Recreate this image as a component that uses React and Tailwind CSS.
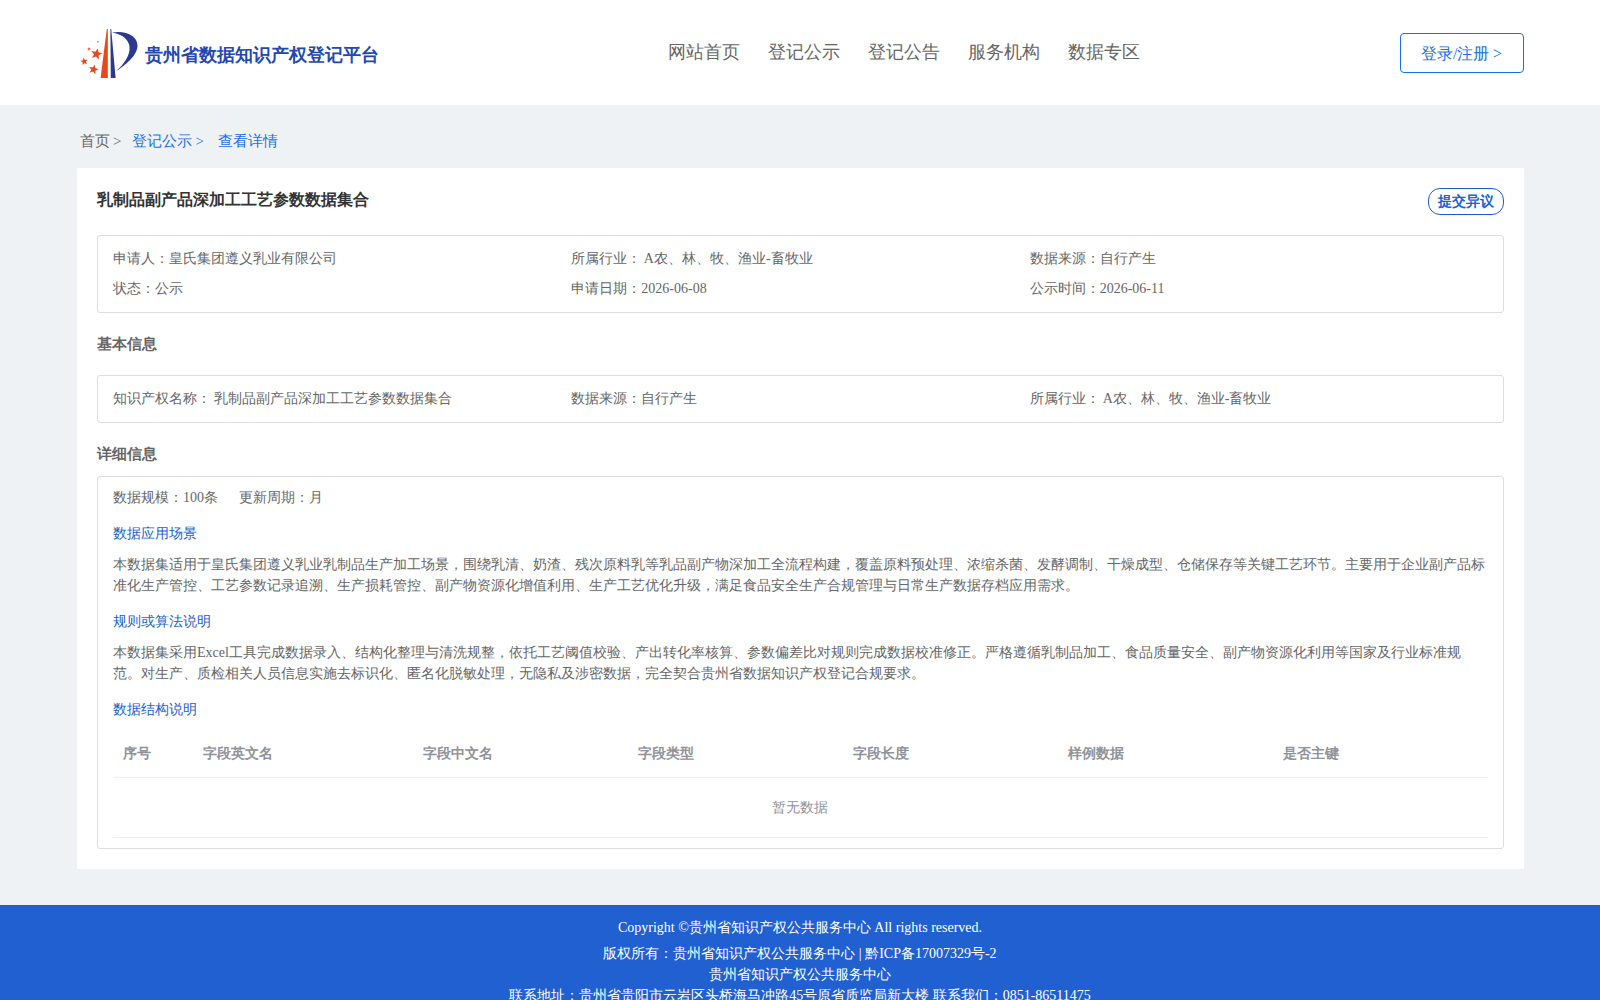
function starPoints(cx, cy, R, rot) {
  const pts = [];
  for (let i = 0; i < 10; i++) {
    const r = i % 2 === 0 ? R : R * 0.42;
    const a = (rot - 90 + i * 36) * (Math.PI / 180);
    pts.push(`${(cx + r * Math.cos(a)).toFixed(2)},${(cy + r * Math.sin(a)).toFixed(2)}`);
  }
  return pts.join(" ");
}

function Logo() {
  return (
    <svg width="60" height="52" viewBox="0 0 60 52" className="shrink-0">
      <path d="M26.8 2 L27.8 2 L27.8 51 L20.6 51 Z" fill="#e8481c" />
      <path d="M30.4 2 L31.2 2 L35.6 51 L30.8 51 Z" fill="#2b3a8f" />
      <path d="M32 5.5 C46 3 57.5 9 57.5 18.5 C57.5 29 45 38 36 44.5 C44 37 50.5 28 49.5 19.5 C48.5 11.5 41 7 32 5.5 Z" fill="#2b3a8f" />
      <polygon points={starPoints(16.5, 27, 6, 12)} fill="#e8481c" />
      <polygon points={starPoints(4.2, 34.5, 4, -10)} fill="#e8481c" />
      <polygon points={starPoints(13.5, 42.5, 5.2, 14)} fill="#e8481c" />
      <circle cx="9" cy="22" r="1.5" fill="#ef7a50" />
      <circle cx="17.8" cy="14.8" r="1" fill="#ef8a60" />
    </svg>
  );
}

function Row({ children }) {
  return <div className="grid grid-cols-3">{children}</div>;
}

const cols = ["序号", "字段英文名", "字段中文名", "字段类型", "字段长度", "样例数据", "是否主键"];

export default function App() {
  return (
    <div className="min-h-screen bg-[#eff2f5] text-[14px] text-[#666666] font-['Liberation_Serif',serif]">
      <header className="h-[105px] bg-white flex items-center justify-between pl-[80px] pr-[76px]">
        <div className="flex items-center w-[300px]">
          <Logo />
          <span className="ml-[5px] mt-[6px] text-[18px] font-bold text-[#2348b0]">贵州省数据知识产权登记平台</span>
        </div>
        <nav className="flex gap-[28px] text-[18px] text-[#666666] -mt-[1px] ml-[28px]">
          <span>网站首页</span>
          <span>登记公示</span>
          <span>登记公告</span>
          <span>服务机构</span>
          <span>数据专区</span>
        </nav>
        <button className="w-[124px] h-[40px] border border-[#1a6fe8] rounded-[4px] text-[16px] text-[#1a6fe8] pt-[2px] pr-[1px] [word-spacing:-0.5px]">登录/注册 &gt;</button>
      </header>

      <main className="pl-[77px] pr-[76px] pb-[36px]">
        <div className="h-[63px] flex items-center pl-[3px] text-[15px] leading-[21px] pt-[10px] [word-spacing:-0.75px]">
          <span>首页 &gt;</span>
          <span className="ml-[11px] text-[#1a6fe8]">登记公示 &gt;</span>
          <span className="ml-[14px] text-[#1a6fe8]">查看详情</span>
        </div>

        <section className="bg-white p-[20px]">
          <div className="flex justify-between items-start h-[47px]">
            <h1 className="text-[16px] font-bold text-[#333333] leading-[24px]">乳制品副产品深加工工艺参数数据集合</h1>
            <button className="w-[76px] h-[27px] border border-[#1a5fd0] rounded-[12px] text-[14px] font-bold text-[#2060d0]">提交异议</button>
          </div>

          <div className="border border-[#dddddd] rounded-[3px] px-[15px] pt-[13px] pb-[13px] leading-[20px] flex flex-col gap-[10px]">
            <Row>
              <span>申请人：皇氏集团遵义乳业有限公司</span>
              <span className="[word-spacing:-1px]">所属行业： A农、林、牧、渔业-畜牧业</span>
              <span>数据来源：自行产生</span>
            </Row>
            <Row>
              <span>状态：公示</span>
              <span>申请日期：2026-06-08</span>
              <span>公示时间：2026-06-11</span>
            </Row>
          </div>

          <h2 className="mt-[20px] mb-[20px] text-[15px] font-bold leading-[22px]">基本信息</h2>

          <div className="border border-[#dddddd] rounded-[3px] px-[15px] py-[13px] leading-[20px]">
            <Row>
              <span className="[word-spacing:-1px]">知识产权名称： 乳制品副产品深加工工艺参数数据集合</span>
              <span>数据来源：自行产生</span>
              <span className="[word-spacing:-0.5px]">所属行业： A农、林、牧、渔业-畜牧业</span>
            </Row>
          </div>

          <h2 className="mt-[20px] mb-[11px] text-[15px] font-bold leading-[22px]">详细信息</h2>

          <div className="border border-[#dddddd] rounded-[3px] px-[15px] pt-[10px] pb-[10px] leading-[21px]">
            <div className="flex gap-[21px]">
              <span>数据规模：100条</span>
              <span>更新周期：月</span>
            </div>
            <h3 className="mt-[15px] text-[#2060d0]">数据应用场景</h3>
            <p className="mt-[10px]">本数据集适用于皇氏集团遵义乳业乳制品生产加工场景，围绕乳清、奶渣、残次原料乳等乳品副产物深加工全流程构建，覆盖原料预处理、浓缩杀菌、发酵调制、干燥成型、仓储保存等关键工艺环节。主要用于企业副产品标准化生产管控、工艺参数记录追溯、生产损耗管控、副产物资源化增值利用、生产工艺优化升级，满足食品安全生产合规管理与日常生产数据存档应用需求。</p>
            <h3 className="mt-[15px] text-[#2060d0]">规则或算法说明</h3>
            <p className="mt-[10px]">本数据集采用Excel工具完成数据录入、结构化整理与清洗规整，依托工艺阈值校验、产出转化率核算、参数偏差比对规则完成数据校准修正。严格遵循乳制品加工、食品质量安全、副产物资源化利用等国家及行业标准规范。对生产、质检相关人员信息实施去标识化、匿名化脱敏处理，无隐私及涉密数据，完全契合贵州省数据知识产权登记合规要求。</p>
            <h3 className="mt-[15px] text-[#2060d0]">数据结构说明</h3>
            <table className="mt-[10px] w-full table-fixed border-collapse">
              <colgroup>
                <col className="w-[80px]" />
                <col className="w-[220px]" />
                <col className="w-[215px]" />
                <col className="w-[215px]" />
                <col className="w-[215px]" />
                <col className="w-[215px]" />
                <col className="w-[215px]" />
              </colgroup>
              <thead>
                <tr className="border-b border-[#ebeef5]">
                  {cols.map((c) => (
                    <th key={c} className="h-[47px] px-[10px] text-left font-bold text-[#909399]">{c}</th>
                  ))}
                </tr>
              </thead>
              <tbody>
                <tr className="border-b border-[#ebeef5]">
                  <td colSpan={7} className="h-[60px] pr-[2px] text-center text-[#909399]">暂无数据</td>
                </tr>
              </tbody>
            </table>
          </div>
        </section>
      </main>

      <footer className="bg-[#2060d0] text-white text-[14px] text-center pt-[12px] pb-[12px] leading-[21px]">
        <p className="mb-[5px]">Copyright ©贵州省知识产权公共服务中心 All rights reserved.</p>
        <p>版权所有：贵州省知识产权公共服务中心 | 黔ICP备17007329号-2</p>
        <p>贵州省知识产权公共服务中心</p>
        <p>联系地址：贵州省贵阳市云岩区头桥海马冲路45号原省质监局新大楼 联系我们：0851-86511475</p>
      </footer>
    </div>
  );
}
